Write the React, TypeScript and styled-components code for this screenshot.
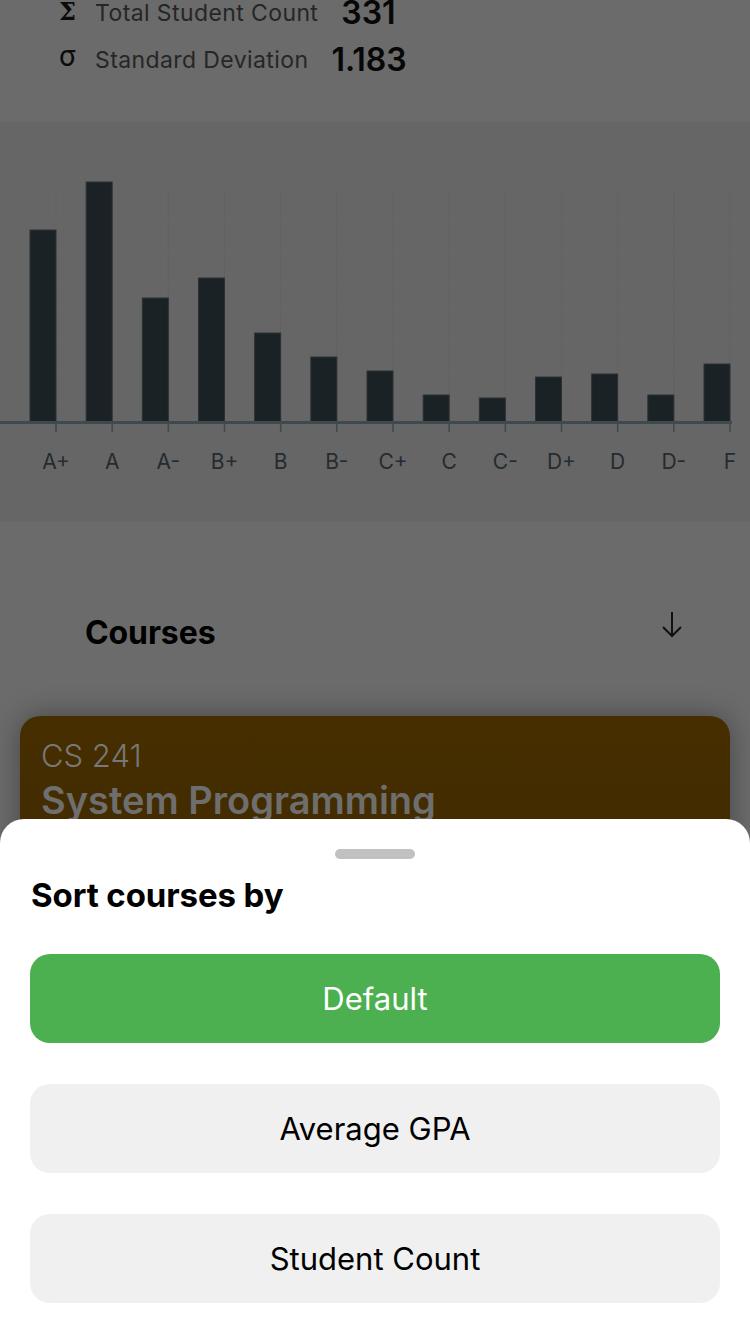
import React from "react";
import styled, { createGlobalStyle } from "styled-components";

const GlobalStyle = createGlobalStyle`
  html, body {
    margin: 0;
    padding: 0;
    background: #6b6b6b;
    font-family: Inter, "Noto Sans", sans-serif;
    overflow: hidden;
  }
  * { box-sizing: border-box; }
`;

const Page = styled.div`
  width: 750px;
  height: 1334px;
  position: relative;
  overflow: hidden;
  background: #6b6b6b;
`;

const Content = styled.div`
  display: flex;
  flex-direction: column;
`;

const Stats = styled.div`
  display: flex;
  flex-direction: column;
  margin-top: -11px;
  padding-left: 58px;
`;

const StatRow = styled.div`
  display: flex;
  align-items: center;
  height: 47px;
`;

const StatIcon = styled.span<{ $serif?: boolean }>`
  width: 37px;
  font-family: ${(p) => (p.$serif ? '"DejaVu Serif", "Liberation Serif", serif' : 'Roboto, "DejaVu Sans", sans-serif')};
  font-weight: ${(p) => (p.$serif ? 700 : 400)};
  font-size: ${(p) => (p.$serif ? "24px" : "29px")};
  color: #0b0b0b;
  line-height: 1;
  padding-left: 1px;
  margin-top: ${(p) => (p.$serif ? "-2px" : "-6px")};
`;

const StatLabel = styled.span`
  font-size: 23px;
  color: #262626;
  letter-spacing: 0.4px;
`;

const StatValue = styled.span`
  margin-left: 23px;
  font-size: 32px;
  font-weight: 600;
  color: #070707;
  line-height: 1;
`;

const ChartSection = styled.div`
  margin-top: 39px;
  height: 400px;
  background: #666666;
`;

const HeaderRow = styled.div`
  display: flex;
  align-items: flex-start;
  justify-content: space-between;
  padding: 91px 66px 0 85px;
  height: 194px;
`;

const HeaderTitle = styled.h2`
  margin: 0;
  font-size: 32px;
  font-weight: 700;
  color: #000;
  line-height: 40px;
  letter-spacing: -0.1px;
`;

const ArrowButton = styled.div`
  width: 24px;
  height: 28px;
  display: flex;
  align-items: center;
  justify-content: center;
  margin-top: -2px;
`;

const CourseCard = styled.div`
  margin: 0 20px;
  height: 200px;
  border-radius: 20px;
  background: linear-gradient(180deg, #462e00 0%, #3f2a00 100%);
  box-shadow: 0 0 28px rgba(0, 0, 0, 0.35);
  padding: 20px 21px;
  display: flex;
  flex-direction: column;
`;

const CourseCode = styled.div`
  font-size: 31px;
  font-weight: 300;
  color: #787878;
  line-height: 40px;
`;

const CourseName = styled.div`
  font-size: 38px;
  font-weight: 600;
  color: #6e6e6e;
  line-height: 48px;
`;

const Sheet = styled.div`
  position: absolute;
  left: 0;
  right: 0;
  top: 819px;
  bottom: 0;
  background: #ffffff;
  border-radius: 24px 24px 0 0;
  padding: 30px 30px 0 30px;
  display: flex;
  flex-direction: column;
`;

const Handle = styled.div`
  align-self: center;
  width: 80px;
  height: 10px;
  border-radius: 5px;
  background: #c1c1c1;
`;

const SheetTitle = styled.h3`
  margin: 17px 0 0 1px;
  font-size: 33px;
  font-weight: 700;
  color: #000;
  line-height: 38px;
  letter-spacing: -0.1px;
`;

const Options = styled.div`
  margin-top: 40px;
  display: flex;
  flex-direction: column;
  gap: 41px;
`;

const Option = styled.button<{ $active?: boolean }>`
  height: 89px;
  border: none;
  border-radius: 20px;
  background: ${(p) => (p.$active ? "#4caf50" : "#f0f0f0")};
  color: ${(p) => (p.$active ? "#ffffff" : "#000000")};
  font-family: Inter, "Noto Sans", sans-serif;
  font-size: 31px;
  font-weight: 400;
  display: flex;
  align-items: center;
  justify-content: center;
  padding: 0;
`;

const grades = [
  { g: "A+", top: 230 },
  { g: "A", top: 182 },
  { g: "A-", top: 298 },
  { g: "B+", top: 278 },
  { g: "B", top: 333 },
  { g: "B-", top: 357 },
  { g: "C+", top: 371 },
  { g: "C", top: 395 },
  { g: "C-", top: 398 },
  { g: "D+", top: 377 },
  { g: "D", top: 374 },
  { g: "D-", top: 395 },
  { g: "F", top: 364 },
];

const Chart: React.FC = () => {
  const y0 = 122;
  const base = 422 - y0;
  const step = (730 - 56) / 12;
  return (
    <svg width="750" height="400" viewBox="0 0 750 400">
      {grades.map((d, i) => {
        const x = 56 + step * i;
        return (
          <line
            key={"g" + i}
            x1={x}
            x2={x}
            y1={192 - y0}
            y2={base}
            stroke="#626262"
            strokeWidth="1"
            strokeDasharray="28 2"
          />
        );
      })}
      {grades.map((d, i) => {
        const x = 56 + step * i;
        const top = d.top - y0;
        return (
          <rect
            key={"b" + i}
            x={x - 26}
            y={top}
            width={26}
            height={base - top + 1}
            fill="#1b2225"
            stroke="#2b3236"
            strokeWidth="1"
          />
        );
      })}
      <rect x="0" y={base - 1} width="732" height="3" fill="#3e4950" />
      {grades.map((d, i) => {
        const x = 56 + step * i;
        return (
          <line
            key={"t" + i}
            x1={x}
            x2={x}
            y1={base + 2}
            y2={base + 10}
            stroke="#3e4950"
            strokeWidth="1.5"
          />
        );
      })}
      {grades.map((d, i) => {
        const x = 56 + step * i;
        return (
          <text
            key={"l" + i}
            x={x}
            y={469 - y0}
            textAnchor="middle"
            fontFamily="Inter, 'Noto Sans', sans-serif"
            fontSize="21"
            fill="#252b2f"
          >
            {d.g}
          </text>
        );
      })}
    </svg>
  );
};

const ArrowDown: React.FC = () => (
  <svg width="24" height="28" viewBox="0 0 24 28" fill="none">
    <path d="M12 1 V25" stroke="#111" strokeWidth="2" />
    <path d="M3 16 L12 25 L21 16" stroke="#111" strokeWidth="2" fill="none" />
  </svg>
);

export default function App() {
  return (
    <Page>
      <GlobalStyle />
      <Content>
        <Stats>
          <StatRow>
            <StatIcon $serif>Σ</StatIcon>
            <StatLabel>Total Student Count</StatLabel>
            <StatValue>331</StatValue>
          </StatRow>
          <StatRow>
            <StatIcon>σ</StatIcon>
            <StatLabel>Standard Deviation</StatLabel>
            <StatValue>1.183</StatValue>
          </StatRow>
        </Stats>
        <ChartSection>
          <Chart />
        </ChartSection>
        <HeaderRow>
          <HeaderTitle>Courses</HeaderTitle>
          <ArrowButton>
            <ArrowDown />
          </ArrowButton>
        </HeaderRow>
        <CourseCard>
          <CourseCode>CS 241</CourseCode>
          <CourseName>System Programming</CourseName>
        </CourseCard>
      </Content>
      <Sheet>
        <Handle />
        <SheetTitle>Sort courses by</SheetTitle>
        <Options>
          <Option $active>Default</Option>
          <Option>Average GPA</Option>
          <Option>Student Count</Option>
        </Options>
      </Sheet>
    </Page>
  );
}
